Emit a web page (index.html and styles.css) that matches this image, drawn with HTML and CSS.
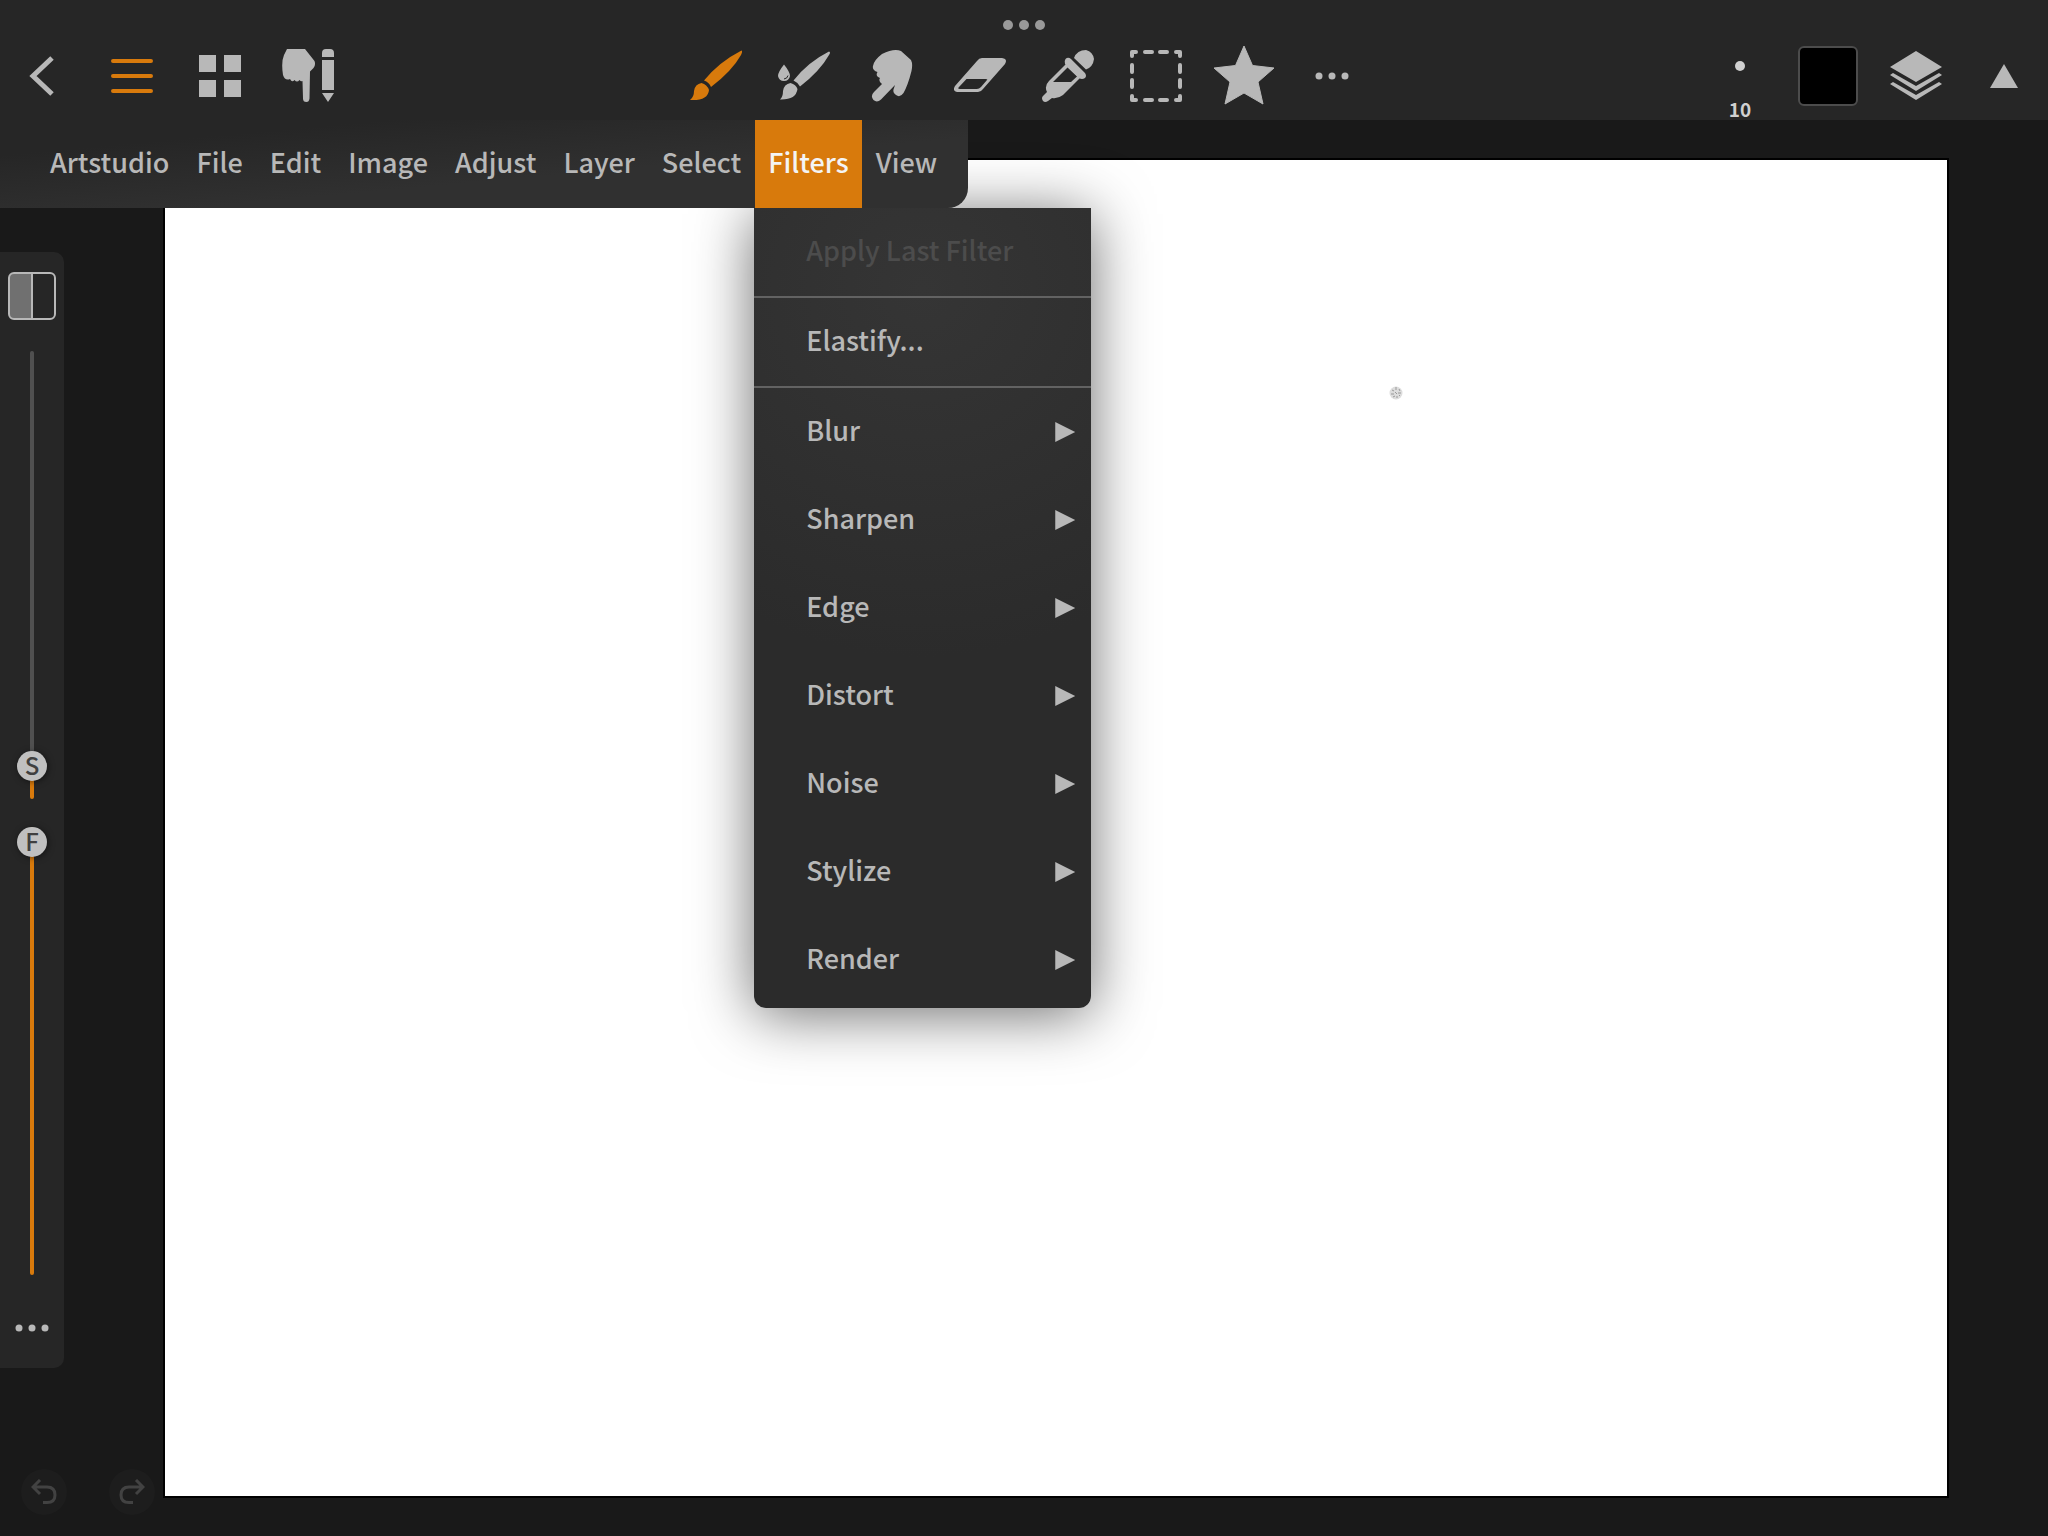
FILE: index.html
```html
<!DOCTYPE html>
<html lang="en">
  <head>
    <meta charset="UTF-8" />
    <meta name="viewport" content="width=device-width, initial-scale=1.0" />
    <title>Artstudio</title>
    <link rel="stylesheet" href="styles.css">
  </head>
  <body>
    <header class="toolbar">
      <button class="window-dots" aria-label="Window options">
        <svg width="42" height="10" viewBox="0 0 42 10"><circle cx="5" cy="5" r="5"/><circle cx="21" cy="5" r="5"/><circle cx="37" cy="5" r="5"/></svg>
      </button>
      <div class="tools">
        <button class="tool" aria-label="Back">
          <svg width="52" height="52" viewBox="0 0 52 52"><path d="M34 8 L15 26 L34 44" fill="none" stroke="currentColor" stroke-width="5"/></svg>
        </button>
        <button class="tool active" aria-label="Menu">
          <svg width="52" height="52" viewBox="0 0 52 52"><path d="M7 11H45M7 26H45M7 41H45" stroke="currentColor" stroke-width="4" stroke-linecap="round"/></svg>
        </button>
        <button class="tool" aria-label="Gallery">
          <svg width="52" height="52" viewBox="0 0 52 52"><path d="M5 5h17v17H5zM30 5h17v17H30zM5 30h17v17H5zM30 30h17v17H30z"/></svg>
        </button>
        <button class="tool" aria-label="Touch and pencil">
          <svg width="52" height="54" viewBox="0 0 52 54"><path d="M5 0H23L32.500 12Q34 16 31.500 19L28 22.500L27.500 49.500Q27 53 24.500 53Q21 53 21 49.500L20.500 32Q19 33 17.500 31Q15 34 12.500 31Q10 34 8 30Q3 32 1 26Q-1 13 2 6Z"/><path d="M40 8V4Q40 0 44 0H48Q52 0 52 4V8ZM40 11H52V41H40ZM40 44H52L46 53Z"/></svg>
        </button>
      </div>
      <div class="tools">
        <button class="tool active" aria-label="Brush">
          <svg width="52" height="52" viewBox="0 0 52 52"><path d="M51.500 .5Q53 1 51 5Q42 21 21 37Q19 32 14 30.500Q29 12 51.500 .5ZM11.500 33Q17 34.500 19 40Q18 51 0 50Q4 47 4 41Q5 34 11.500 33Z"/></svg>
        </button>
        <button class="tool" aria-label="Wet brush">
          <svg width="52" height="52" viewBox="0 0 52 52"><path d="M51 1.500Q53 2 51 5Q42 21 22 36.500Q20 32.500 15.500 30.500Q30 12 51 1.500ZM12.500 33Q18 34.500 19.500 39Q18 50 2 49.500Q5 47 5 41Q6 34 12.500 33ZM6 14.500Q12 22 12 26Q11 31 6 31Q1 31 0 26Q0 22 6 14.500Z"/><path d="M10 25.500Q9.500 28.500 6 29" fill="none" stroke="#272727"/></svg>
        </button>
        <button class="tool" aria-label="Smudge">
          <svg width="52" height="52" viewBox="-6 0 52 52"><path d="M10 4Q22-2 29 1L39 10Q41 14 39.500 21Q36 35 31.500 43Q28 48 24 45Q20 43 22 38L23 35L9 49.500Q5 53 1.500 50Q-2 46 2 42L10 34Q6 31 8 28Q3 26 5.500 22Q0 20 1 16Q2 10 10 4Z"/></svg>
        </button>
        <button class="tool" aria-label="Eraser">
          <svg width="52" height="52" viewBox="0 0 52 52"><path fill-rule="evenodd" d="M28 8H48Q54 9 51 14L29 39Q27 42 24 42H3Q-2 41 1 36L23 11Q25 8 28 8ZM12.500 29L5 37Q3 39 6 39H23Q25 39 27 37L33 30Q34 29 32 29Z"/></svg>
        </button>
        <button class="tool" aria-label="Eyedropper">
          <svg width="52" height="52" viewBox="0 0 52 52"><path d="M32 8Q35 0 44 0Q51 2 52 9Q51 17 44 19.500ZM23.500 9Q26 6.500 29 9L43 23Q45 26 43 28Q40 30 37 28L23 14Q22 11 23.500 9Z"/><path fill-rule="evenodd" d="M24 14L38 28L21 45Q16 49 10 48L6 51Q3 53 1 51Q-1 48 1 46L5 42Q2 36 7 31ZM25.500 17.500L11 32H29L35 26.500Z"/></svg>
        </button>
        <button class="tool" aria-label="Selection">
          <svg width="52" height="52" viewBox="0 0 52 52"><path d="M2 6V2H6M46 2H50V6M50 46V50H46M6 50H2V46M15 2H22M30 2H37M15 50H22M30 50H37M2 15V22M2 30V37M50 15V22M50 30V37" fill="none" stroke="currentColor" stroke-width="4" stroke-linejoin="round" stroke-linecap="round"/></svg>
        </button>
        <button class="tool" aria-label="Favourites">
          <svg width="62" height="60" viewBox="0 1 62 60"><path d="M31 1L39.500 20.500L61 23L45 37L50 59L31 48L12 59L17 37L1 23L22.500 20.500Z" stroke="currentColor" stroke-linejoin="round"/></svg>
        </button>
        <button class="tool" aria-label="More tools">
          <svg width="34" height="8" viewBox="0 0 34 8"><circle cx="4" cy="4" r="3.500"/><circle cx="17" cy="4" r="3.500"/><circle cx="30" cy="4" r="3.500"/></svg>
        </button>
      </div>
      <div class="tools">
        <button class="tool brush-size" aria-label="Brush size">
          <span class="brush-dot"></span>
          <span>10</span>
        </button>
        <button class="tool" aria-label="Colour"><span class="swatch"></span></button>
        <button class="tool" aria-label="Layers">
          <svg width="54" height="50" viewBox="0 0 54 50"><path d="M27 0L53 16L27 31L1 16ZM1 24L4 22L27 35L50 22L53 24L27 40ZM1 33L4 31L27 44L50 31L53 33L27 49Z"/></svg>
        </button>
        <button class="tool" aria-label="Collapse">
          <svg width="28" height="24" viewBox="0 0 28 24"><path d="M14 0L28 24H0Z"/></svg>
        </button>
      </div>
    </header>

    <main class="workspace">
      <nav class="menubar">
        <ul class="menus">
          <li><button class="menu">Artstudio</button></li>
          <li><button class="menu">File</button></li>
          <li><button class="menu">Edit</button></li>
          <li><button class="menu">Image</button></li>
          <li><button class="menu">Adjust</button></li>
          <li><button class="menu">Layer</button></li>
          <li><button class="menu">Select</button></li>
          <li class="open">
            <button class="menu" aria-expanded="true">Filters</button>
            <ul class="dropdown">
              <li><button class="entry" disabled>Apply Last Filter</button></li>
              <li class="separated"><button class="entry">Elastify...</button></li>
              <li class="separated"><button class="entry sub">Blur</button></li>
              <li><button class="entry sub">Sharpen</button></li>
              <li><button class="entry sub">Edge</button></li>
              <li><button class="entry sub">Distort</button></li>
              <li><button class="entry sub">Noise</button></li>
              <li><button class="entry sub">Stylize</button></li>
              <li><button class="entry sub">Render</button></li>
            </ul>
          </li>
          <li><button class="menu">View</button></li>
        </ul>
      </nav>

      <aside class="gutter">
        <div class="sidebar">
          <button class="split" aria-label="Panel side"></button>
          <div class="slider" style="--value: 0.044">
            <input id="size" type="range" min="0" max="1000" value="44">
            <label for="size">S</label>
          </div>
          <div class="slider" style="--value: 1">
            <input id="flow" type="range" min="0" max="1000" value="1000">
            <label for="flow">F</label>
          </div>
          <button class="more" aria-label="More sliders">
            <svg width="34" height="8" viewBox="0 0 34 8"><circle cx="4" cy="4" r="3.500"/><circle cx="17" cy="4" r="3.500"/><circle cx="30" cy="4" r="3.500"/></svg>
          </button>
        </div>
        <div class="history">
          <button class="step" aria-label="Undo" disabled>
            <svg width="26" height="26" viewBox="0 0 26 26"><path d="M9 1L2 8L9 15M2 8H16Q24 8 24 16Q24 23.500 16 23.500H12" fill="none" stroke="currentColor" stroke-width="3"/></svg>
          </button>
          <button class="step" aria-label="Redo" disabled>
            <svg width="26" height="26" viewBox="0 0 26 26"><path d="M17 1L24 8L17 15M24 8H10Q2 8 2 16Q2 23.500 10 23.500H14" fill="none" stroke="currentColor" stroke-width="3"/></svg>
          </button>
        </div>
      </aside>

      <section class="canvas" aria-label="Canvas">
        <svg class="stroke" width="14" height="14" viewBox="0 0 14 14"><circle cx="7" cy="7" r="6.500" fill="#ddd"/><path d="M3 4l2 1M7 1v3M10 3l1 2M2 8h3M6 6l2 2M9 7h3M4 11l2-1M8 10v2M10 10l1-1" stroke="#999"/></svg>
      </section>
    </main>
  </body>
</html>
```
FILE: styles.css
```css
:root {
  --bar-color: #262626;
  --back-color: #191919;
  --text-color: #b8b8b8;
  --accent-color: #d87a0c;
  --unit: 88px;
}

* {
  margin: 0;
  padding: 0;
  box-sizing: border-box;
}

body {
  display: flex;
  flex-direction: column;
  height: 100vh;
  background-color: var(--back-color);
  color: var(--text-color);
  font-family: 'Noto Sans CJK JP', 'Noto Sans', sans-serif;
  font-size: 27px;
  font-weight: 500;
}

button {
  border: 0;
  background: none;
  color: inherit;
  font: inherit;
}

ul {
  list-style: none;
}

svg {
  display: block;
  fill: currentColor;
}

/* toolbar */
.toolbar {
  position: relative;
  z-index: 3;
  display: flex;
  justify-content: space-between;
  padding-top: 32px;
  background-color: var(--bar-color);
}

.window-dots {
  position: absolute;
  top: 20px;
  left: 50%;
  transform: translateX(-50%);
  color: #999;
}

.tools {
  display: flex;
}

.tool {
  display: flex;
  align-items: center;
  justify-content: center;
  width: var(--unit);
  height: var(--unit);
}

.tool.active {
  color: var(--accent-color);
}

.brush-size {
  flex-direction: column;
  justify-content: flex-end;
  gap: 28px;
  padding-bottom: 1px;
  color: #d0d0d0;
  font-size: 19px;
  font-weight: 700;
  line-height: 20px;
}

.brush-dot {
  width: 10px;
  height: 10px;
  border-radius: 50%;
  background-color: #d0d0d0;
}

.swatch {
  width: 60px;
  height: 60px;
  border: 2px solid #4c4c4c;
  border-radius: 6px;
  background-color: #000;
}

/* menus */
.workspace {
  position: relative;
  flex: 1;
  display: grid;
  grid-template-rows: minmax(0, 1fr);
  grid-template-columns: 163px 1fr;
  min-height: 0;
}

.menubar {
  position: absolute;
  z-index: 2;
  top: 0;
  left: 0;
}

.menus {
  display: flex;
  gap: 1px;
  padding: 0 18px 0 37px;
  border-bottom-right-radius: 20px;
  background: linear-gradient(to bottom right, #262626 20%, #303030 60%);
}

.menu {
  height: var(--unit);
  padding: 0 13px 6px;
}

.open {
  position: relative;
}

.open > .menu {
  background-color: var(--accent-color);
  color: #f4f4f4;
}

.dropdown {
  position: absolute;
  z-index: -1;
  top: 100%;
  left: -1px;
  width: 337px;
  padding-bottom: 4px;
  border-radius: 0 0 12px 12px;
  background: radial-gradient(circle at 50% 10%, #353535, #2b2b2b 50%);
  box-shadow: 0 6px 60px rgba(0, 0, 0, 0.58);
}

.separated {
  border-top: 2px solid #626262;
}

.entry {
  display: flex;
  align-items: center;
  justify-content: space-between;
  width: 100%;
  height: var(--unit);
  padding: 0 16px 6px 52px;
}

.entry:disabled {
  color: #4c4c4c;
}

.sub::after {
  content: '';
  width: 20px;
  height: 20px;
  margin-top: 6px;
  background-color: var(--text-color);
  clip-path: polygon(0 0, 100% 50%, 0 100%);
}

/* left side */
.gutter {
  display: flex;
  flex-direction: column;
  align-items: flex-start;
  padding: 132px 0 21px;
}

.sidebar {
  flex: 1;
  display: flex;
  flex-direction: column;
  align-items: center;
  width: 64px;
  min-height: 0;
  margin-bottom: 101px;
  padding: 20px 0 15px;
  border-radius: 0 10px 10px 0;
  background-color: var(--bar-color);
}

.split {
  width: 48px;
  height: 48px;
  margin-bottom: 31px;
  border: 2px solid var(--text-color);
  border-radius: 6px;
  background: linear-gradient(to right, #707070 21px, var(--text-color) 21px 23px, transparent 23px);
}

.slider {
  position: relative;
  flex: 1;
  width: 32px;
  min-height: 0;
  margin-bottom: 28px;
}

.slider input {
  display: block;
  width: 32px;
  height: 100%;
  appearance: none;
  background: none;
  writing-mode: vertical-lr;
  direction: rtl;
}

.slider input::-webkit-slider-runnable-track {
  width: 4px;
  border-radius: 2px;
  background: linear-gradient(to top, var(--accent-color) calc(var(--value) * 100%), #505050 0);
}

.slider input::-webkit-slider-thumb {
  width: 30px;
  height: 30px;
  margin-left: -13px;
  appearance: none;
  border-radius: 50%;
  background-color: #c0c0c0;
  box-shadow: 1px 1px 6px rgba(0, 0, 0, 0.5);
}

.slider label {
  position: absolute;
  top: calc((100% - 30px) * (1 - var(--value)));
  left: 0;
  width: 100%;
  color: #404040;
  font-size: 24px;
  line-height: 28px;
  text-align: center;
  pointer-events: none;
}

.more {
  display: flex;
  align-items: center;
  justify-content: center;
  width: 64px;
  height: 50px;
}

.history {
  display: flex;
  gap: 42px;
  padding-left: 21px;
}

.step {
  display: flex;
  align-items: center;
  justify-content: center;
  width: 46px;
  height: 46px;
  border-radius: 50%;
  background-color: #1d1d1d;
  color: #424242;
}

/* canvas */
.canvas {
  position: relative;
  margin: 38px 99px 38px 0;
  border: 2px solid #000;
  background-color: #fff;
}

.stroke {
  position: absolute;
  top: 226px;
  left: 1224px;
}
```
